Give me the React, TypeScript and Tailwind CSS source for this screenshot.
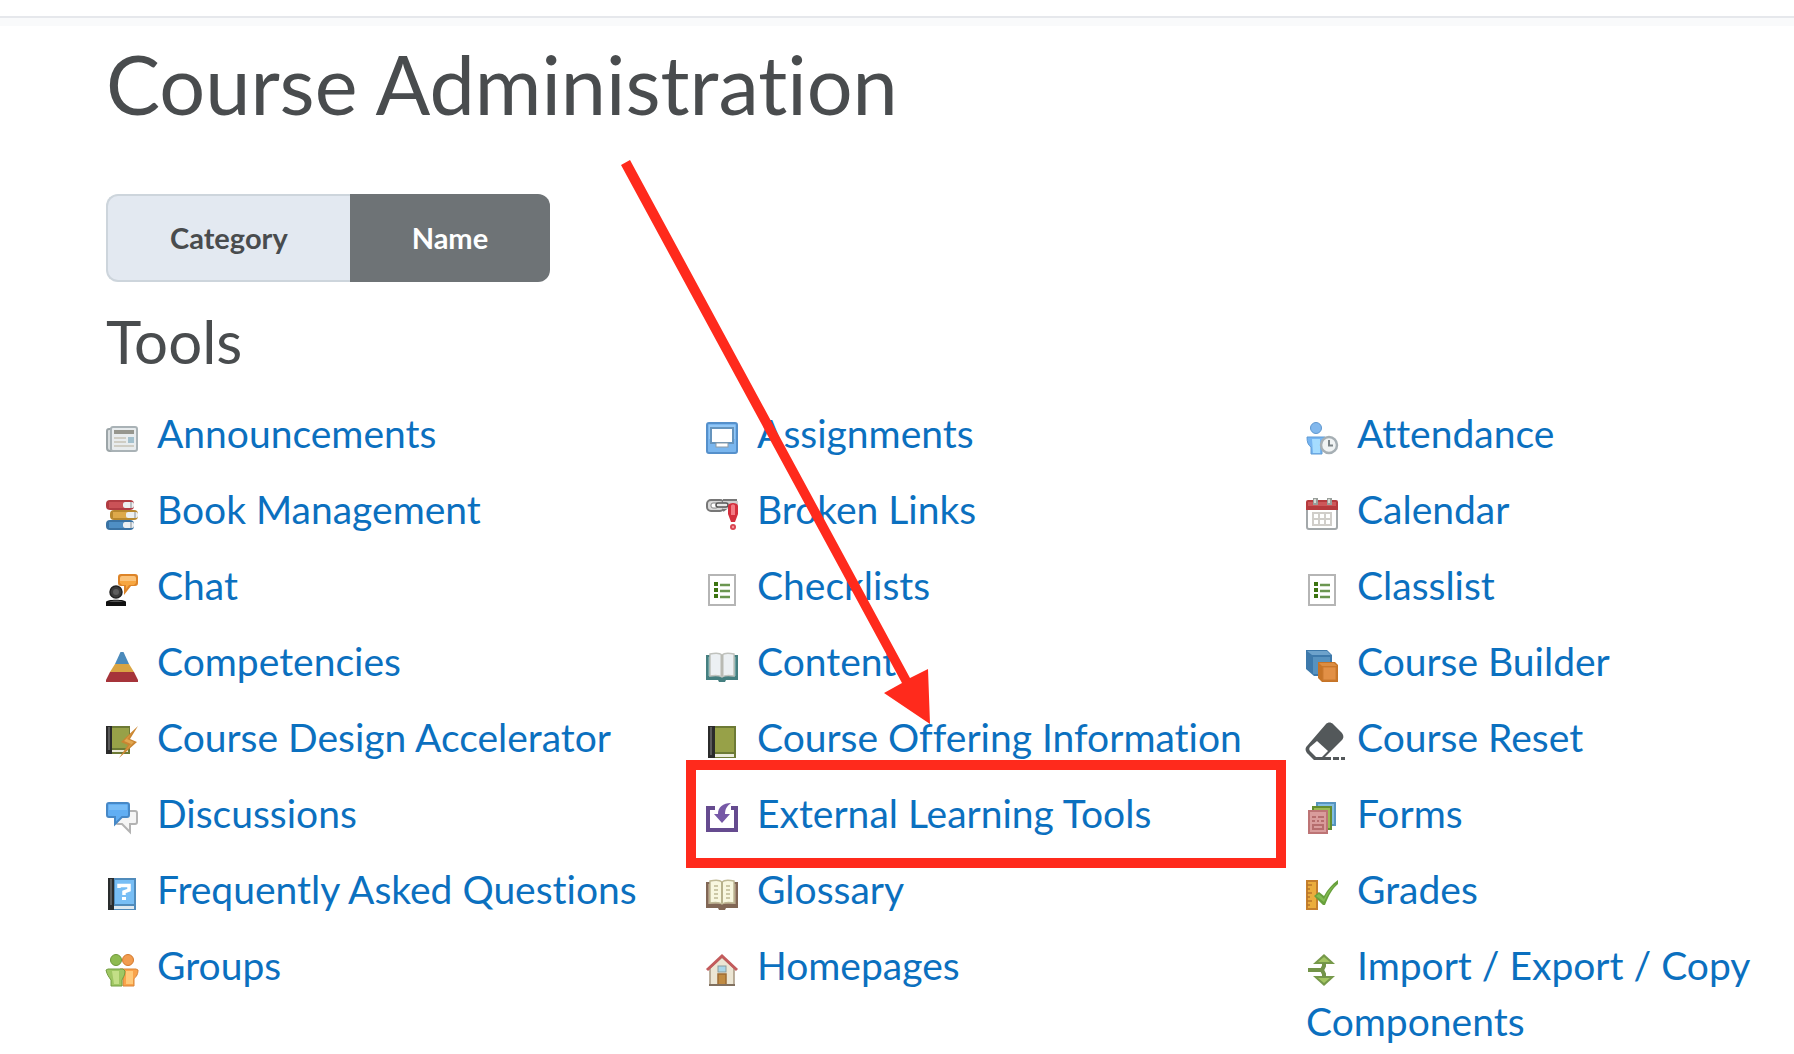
import React from "react";

type Tool = {
  name: string;
  icon: React.ReactNode;
  highlighted?: boolean;
};

const bookCover = (
  <>
    <rect x="2" y="0" width="28" height="32" fill="#6d7a35" />
    <rect x="2" y="0" width="7" height="32" fill="#2b2b2b" />
    <rect x="4" y="1" width="2" height="28" fill="#5a5a5a" />
    <rect x="9" y="2" width="19" height="24" fill="#97a148" />
    <rect x="9" y="28" width="19" height="3" fill="#ecebdc" />
  </>
);

const checklist = (
  <>
    <rect x="3" y="1" width="26" height="30" fill="#fff" stroke="#b5b5b5" strokeWidth="2" />
    <path d="M8 8h4v4H8zM8 14h4v4H8zM8 20h4v4H8z" fill="#3c7410" />
    <path d="M14 11h10M14 17h10M14 23h10" stroke="#6b9650" strokeWidth="2.4" />
  </>
);

const tools: Tool[] = [
  {
    name: "Announcements",
    icon: (
      <>
        <path d="M5 7H3a2 2 0 0 0-2 2v17a3 3 0 0 0 3 3h4" fill="#d9dee0" stroke="#9ca5a8" strokeWidth="2" />
        <rect x="5" y="5" width="26" height="24" rx="2" fill="#e8ecee" stroke="#a9b2b6" strokeWidth="2" />
        <rect x="8" y="8" width="20" height="4" fill="#96968e" />
        <path d="M8 16h12M8 20h12M8 24h20" stroke="#cfcdc4" strokeWidth="2" />
        <rect x="22" y="15" width="6" height="6" fill="#a3c0cd" />
      </>
    ),
  },
  {
    name: "Assignments",
    icon: (
      <>
        <rect x="1" y="1" width="30" height="30" rx="2" fill="#7ab6ee" stroke="#5590cb" strokeWidth="2" />
        <rect x="3" y="3" width="26" height="14" fill="#92c7f6" />
        <rect x="5" y="6" width="22" height="15" fill="#fff" stroke="#6594bd" strokeWidth="2" />
        <rect x="10" y="21" width="12" height="4" fill="#fff" stroke="#8d9ba6" strokeWidth="1" />
      </>
    ),
  },
  {
    name: "Attendance",
    icon: (
      <>
        <circle cx="10" cy="6" r="5.500" fill="#82b8ed" stroke="#5e97d0" />
        <path d="M1 15h18v7h-3v10H5v-7c-3-2-4-5-4-10z" fill="#76b5f2" stroke="#5f9bd4" />
        <path d="M6 17h8v14H7z" fill="#a5dcff" />
        <circle cx="23" cy="23" r="8" fill="#f0f3f4" stroke="#a6afb4" strokeWidth="2.500" />
        <path d="M23 18v5.500h4" fill="none" stroke="#7d8588" strokeWidth="2" />
      </>
    ),
  },
  {
    name: "Book Management",
    icon: (
      <>
        <rect x="0" y="2" width="28" height="10" rx="4" fill="#b13c42" />
        <rect x="3" y="4" width="14" height="6" fill="#ca5257" />
        <rect x="17" y="4" width="11" height="6" rx="2" fill="#eceff1" />
        <rect x="4" y="12" width="28" height="10" rx="4" fill="#b8882e" />
        <rect x="7" y="14" width="14" height="6" fill="#dda94a" />
        <rect x="20" y="14" width="12" height="6" rx="2" fill="#eceff1" />
        <rect x="0" y="22" width="28" height="10" rx="4" fill="#3972a3" />
        <rect x="3" y="24" width="14" height="6" fill="#4f8fc4" />
        <rect x="17" y="24" width="11" height="6" rx="2" fill="#eceff1" />
        <path d="M25 4v6M29 14v6M25 24v6" stroke="#a9b0b4" strokeWidth="1.500" />
      </>
    ),
  },
  {
    name: "Broken Links",
    icon: (
      <>
        <rect x="1" y="2" width="17" height="11" rx="4" fill="#d9d9d9" stroke="#777" strokeWidth="2" />
        <path d="M17 2h14M17 13l4-3" stroke="#777" strokeWidth="2" />
        <path d="M17 3h15v8H17z" fill="#cfcfcf" />
        <rect x="5" y="5" width="7" height="5" rx="2" fill="#fff" stroke="#888" />
        <rect x="10" y="5" width="12" height="4" rx="2" fill="#e8e8e8" stroke="#555" strokeWidth="1.500" />
        <path d="M22 8c0-4 10-4 10 0v8l-3 8h-4l-3-8z" fill="#d42f3d" />
        <path d="M25 8c0-2 4-2 4 0v9h-4z" fill="#f27b84" />
        <circle cx="27" cy="29" r="3" fill="#d94450" />
        <circle cx="27" cy="29" r="1.200" fill="#f4959b" />
      </>
    ),
  },
  {
    name: "Calendar",
    icon: (
      <>
        <path d="M1 9h30v20a2 2 0 0 1-2 2H3a2 2 0 0 1-2-2z" fill="#fff" stroke="#a3a8aa" strokeWidth="2" />
        <path d="M0 12V4a2 2 0 0 1 2-2h28a2 2 0 0 1 2 2v8z" fill="#b63a3d" />
        <path d="M2 4h28v4H2z" fill="#cd5759" />
        <path d="M7 0h5v7H7zM21 0h5v7h-5z" fill="#989e9a" />
        <path d="M8 1h2v4H8zM22 1h2v4h-2z" fill="#d6d9d2" />
        <path d="M7 15h18v12H7zM7 21h18M13 15v12M19 15v12" fill="none" stroke="#d0ceca" strokeWidth="2" />
      </>
    ),
  },
  {
    name: "Chat",
    icon: (
      <>
        <path d="M15 0h14a3 3 0 0 1 3 3v6a3 3 0 0 1-3 3h-4l-7 9v-9h-3a3 3 0 0 1-3-3V3a3 3 0 0 1 3-3z" fill="#dd8428" />
        <path d="M16 2h12a2 2 0 0 1 2 2v5H14V4a2 2 0 0 1 2-2z" fill="#fbc37a" />
        <path d="M14 7h16v2l-2 2h-5l-3 4v-4h-4l-2-2z" fill="#f7a640" />
        <circle cx="10" cy="18" r="6" fill="#3c3c3c" stroke="#222" strokeWidth="1.500" />
        <circle cx="10" cy="18" r="3" fill="#5e5e5e" />
        <path d="M0 32v-4c0-3 20-3 20 0v4z" fill="#111" />
        <path d="M3 28c3-2 11-2 14 0z" fill="#555" />
      </>
    ),
  },
  { name: "Checklists", icon: checklist },
  { name: "Classlist", icon: checklist },
  {
    name: "Competencies",
    icon: (
      <>
        <path d="M14.500 2h3L23 14H9z" fill="#4b8abb" />
        <path d="M9 14h14l5 8H4z" fill="#d9a443" />
        <path d="M4 22h24l4 8v2H0v-2z" fill="#a6343a" />
      </>
    ),
  },
  {
    name: "Content",
    icon: (
      <>
        <path d="M0 5h32v25H20l-1 2h-6l-1-2H0z" fill="#457f80" />
        <path d="M2 7h28v19H2z" fill="#6ba0a0" />
        <path d="M4 4c5-1 10-1 12 1 2-2 7-2 12-1v22c-5-1-9-1-12 1-3-2-7-2-12-1z" fill="#ecf0f3" stroke="#c0c2bd" strokeWidth="1.500" />
        <path d="M16 5v21" stroke="#b9bab3" strokeWidth="3" />
      </>
    ),
  },
  {
    name: "Course Builder",
    icon: (
      <>
        <path d="M0 0h21l5 5v21H8l-8-7z" fill="#3d79ab" />
        <path d="M1 1h20l4 4H6z" fill="#6da2cb" />
        <rect x="7" y="7" width="17" height="17" fill="#5792bf" />
        <path d="M12 12h17l3 3v17H16l-4-4z" fill="#c67427" />
        <path d="M13 13h15l3 3H16z" fill="#dc8d42" />
        <rect x="17" y="17" width="13" height="13" fill="#e29046" stroke="#cb7b30" strokeWidth="1" />
      </>
    ),
  },
  {
    name: "Course Design Accelerator",
    icon: (
      <>
        <rect x="0" y="0" width="24" height="28" fill="#6d7a35" />
        <rect x="0" y="0" width="6" height="28" fill="#2b2b2b" />
        <rect x="2" y="1" width="2" height="23" fill="#5a5a5a" />
        <rect x="6" y="2" width="17" height="20" fill="#97a148" />
        <rect x="6" y="24" width="16" height="2" fill="#ecebdc" />
        <path d="M32 0L15 16l7 3-9 13 18-16-7-3z" fill="#c98531" />
        <path d="M29 4L18 15l7 3-7 8 10-10-7-3z" fill="#e2a750" />
      </>
    ),
  },
  { name: "Course Offering Information", icon: bookCover },
  {
    name: "Course Reset",
    icon: (
      <>
        <path d="M20 -2c2-2 5-2 7 0l8 8c3 3 3 6 1 8L20 30l-1 1h20v3H8L2 28c-3-3-3-6-1-8z" fill="#53585a" />
        <path d="M11 15l11 10-6 6h-6l-6-6c-1-1-1-3 0-4z" fill="#fff" />
        <path d="M26 30v5M34 30v5" stroke="#fff" strokeWidth="2" />
      </>
    ),
  },
  {
    name: "Discussions",
    icon: (
      <>
        <path d="M12 9h17a2 2 0 0 1 2 2v9a2 2 0 0 1-2 2h-5v8l-8-8h-4a2 2 0 0 1-2-2v-9z" fill="#f5f5f5" stroke="#b3b3b3" strokeWidth="2" />
        <path d="M3 1h18a2 2 0 0 1 2 2v10a2 2 0 0 1-2 2h-5l-7 7v-7H3a2 2 0 0 1-2-2V3a2 2 0 0 1 2-2z" fill="#61aef3" stroke="#4788c6" strokeWidth="2" />
        <path d="M3 3h18v5H3z" fill="#78bcf6" />
      </>
    ),
  },
  {
    name: "External Learning Tools",
    highlighted: true,
    icon: (
      <>
        <path d="M9 6H2v22h28V6h-5" fill="none" stroke="#654b8f" strokeWidth="4" />
        <path d="M25 1c-8 0-13 4-13 11H8l8 9 8-9h-5c0-5 2-8 6-11z" fill="#7658a6" />
      </>
    ),
  },
  {
    name: "Forms",
    icon: (
      <>
        <rect x="11" y="1" width="18" height="22" fill="#83bde2" stroke="#5795bf" strokeWidth="2" />
        <rect x="7" y="5" width="18" height="22" fill="#9aba55" stroke="#648d2f" strokeWidth="2" />
        <rect x="3" y="9" width="18" height="22" fill="#d99c9c" stroke="#bd7475" strokeWidth="2" />
        <path d="M6 15h4M12 15h6M6 19h3M11 19h2M15 19h3" stroke="#b66d6e" strokeWidth="2" />
        <rect x="7" y="23" width="10" height="4" fill="none" stroke="#b66d6e" strokeWidth="2" />
      </>
    ),
  },
  {
    name: "Frequently Asked Questions",
    icon: (
      <>
        <rect x="2" y="0" width="28" height="32" fill="#508bbb" />
        <rect x="2" y="0" width="6" height="32" fill="#292c2d" />
        <rect x="4" y="1" width="2" height="26" fill="#5a5d5f" />
        <rect x="9" y="2" width="19" height="24" fill="#78bef5" />
        <rect x="8" y="28" width="20" height="3" fill="#dfe9f0" />
        <path d="M13 10V7.500h10V12l-5 2v3" fill="none" stroke="#fff" strokeWidth="3.500" />
        <rect x="16" y="19" width="4" height="3" fill="#fff" />
      </>
    ),
  },
  {
    name: "Glossary",
    icon: (
      <>
        <path d="M0 4h32v26H20l-1 2h-6l-1-2H0z" fill="#816755" />
        <path d="M2 6h28v20H2z" fill="#aa927c" />
        <path d="M4 3c5-1 10-1 12 1 2-2 7-2 12-1v22c-5-1-9-1-12 1-3-2-7-2-12-1z" fill="#f8f7df" stroke="#bfb995" strokeWidth="1.500" />
        <path d="M16 4v21" stroke="#b7b18b" strokeWidth="2" />
        <path d="M8 8h4M8 12h4M8 16h4M8 20h4M20 8h4M20 12h4M20 16h4M20 20h4" stroke="#bdb994" strokeWidth="1.500" />
      </>
    ),
  },
  {
    name: "Grades",
    icon: (
      <>
        <rect x="1" y="3" width="10" height="28" fill="#ebad3d" stroke="#c57f2d" strokeWidth="2" />
        <path d="M1 7h5M1 11h3M1 15h5M1 19h3M1 23h5M1 27h3" stroke="#b9752a" strokeWidth="1.500" />
        <path d="M8 18l5-4 5 4c4-7 8-12 14-16v4c-6 5-9 11-13 21h-2z" fill="#68a03c" />
        <path d="M10 18l3-2 5 5c4-8 7-12 12-15-5 5-8 10-12 18z" fill="#82bb51" />
      </>
    ),
  },
  {
    name: "Groups",
    icon: (
      <>
        <circle cx="10" cy="6" r="5.500" fill="#8ebb51" stroke="#6e9839" />
        <circle cx="22" cy="6" r="5.500" fill="#f29c4f" stroke="#d47a2d" />
        <path d="M14 15h16l2 1c0 6-3 7-4 9v7H17V20z" fill="#f9a34b" stroke="#d88437" />
        <path d="M20 17h7v13h-7z" fill="#ffc979" />
        <path d="M2 15h15l2 2c0 5-2 6-3 9v6H5v-6c-2-3-4-5-5-10z" fill="#9fc763" stroke="#739c42" />
        <path d="M6 17h7v13H8z" fill="#c3df87" />
      </>
    ),
  },
  {
    name: "Homepages",
    icon: (
      <>
        <path d="M4 14L16 3l12 11v17H4z" fill="#ece6d4" stroke="#a69780" strokeWidth="1.500" />
        <path d="M1 16L16 2l15 14" fill="none" stroke="#c35b5c" strokeWidth="3" />
        <rect x="12" y="12" width="8" height="6" fill="#a9d6e9" stroke="#8b9c9b" strokeWidth="1" />
        <rect x="12" y="20" width="8" height="11" fill="#c08b42" stroke="#9d6c35" strokeWidth="1.500" />
        <path d="M3 31h26" stroke="#80705f" strokeWidth="2" />
      </>
    ),
  },
  {
    name: "Import / Export / Copy Components",
    icon: (
      <>
        <path d="M18 0L29 10H7z" fill="#76994a" />
        <path d="M18 32L7 22h22z" fill="#76994a" />
        <path d="M18 3l6 5H12zM18 29l-6-5h12z" fill="#a3c562" />
        <path d="M18 9v3l-2 4 2 4v3M2 16h14" fill="none" stroke="#739449" strokeWidth="4" />
      </>
    ),
  },
];

const ToolLink: React.FC<{ tool: Tool }> = ({ tool }) => {
  return (
    <li className="relative text-[39px] leading-[56px]">
      <a href="#" className="text-[#0b70bf] hover:underline">
        <svg
          className="mr-[19px] inline size-8 overflow-visible align-[-6px]"
          viewBox="0 0 32 32"
          aria-hidden="true"
        >
          {tool.icon}
        </svg>
        {tool.name}
      </a>
      {tool.highlighted && (
        <span className="pointer-events-none absolute -top-[25px] -bottom-[27px] -left-5 right-5 border-10 border-[#ff2a1c]" />
      )}
    </li>
  );
};

const App: React.FC = () => {
  return (
    <div className="min-h-screen overflow-hidden bg-white font-['Lato',sans-serif] text-[#494c4e] [font-variant-ligatures:none]">
      <div className="h-[26px] border-b-8 border-[#f9fafb]">
        <div className="h-[18px] border-b-2 border-[#e6e8ec]" />
      </div>
      <main className="relative pl-[106px]">
        <h1 className="pt-2 text-[81px] leading-[100px]">Course Administration</h1>
        <div className="mt-[60px] flex">
          <button className="h-[88px] rounded-l-xl border-2 border-r-0 border-[#cdd5dc] bg-[#e3e9f1] px-[62px] text-[29px] font-bold">
            Category
          </button>
          <button className="h-[88px] rounded-r-xl bg-[#6e7376] px-[62px] text-[29px] font-bold text-white">
            Name
          </button>
        </div>
        <h2 className="mt-[21px] text-[60px] leading-[76px]">Tools</h2>
        <ul className="mt-[26px] grid grid-cols-[600fr_600fr_488fr] gap-y-5">
          {tools.map((tool) => (
            <ToolLink key={tool.name} tool={tool} />
          ))}
        </ul>
        <svg
          className="pointer-events-none absolute top-[134px] left-[621px] h-[564px] w-[310px]"
          viewBox="0 0 310 564"
          aria-hidden="true"
        >
          <path d="M0 5L9 0L289 518L307 509L309 564L263 533L281 523Z" fill="#ff2a1c" />
        </svg>
      </main>
    </div>
  );
};

export default App;
